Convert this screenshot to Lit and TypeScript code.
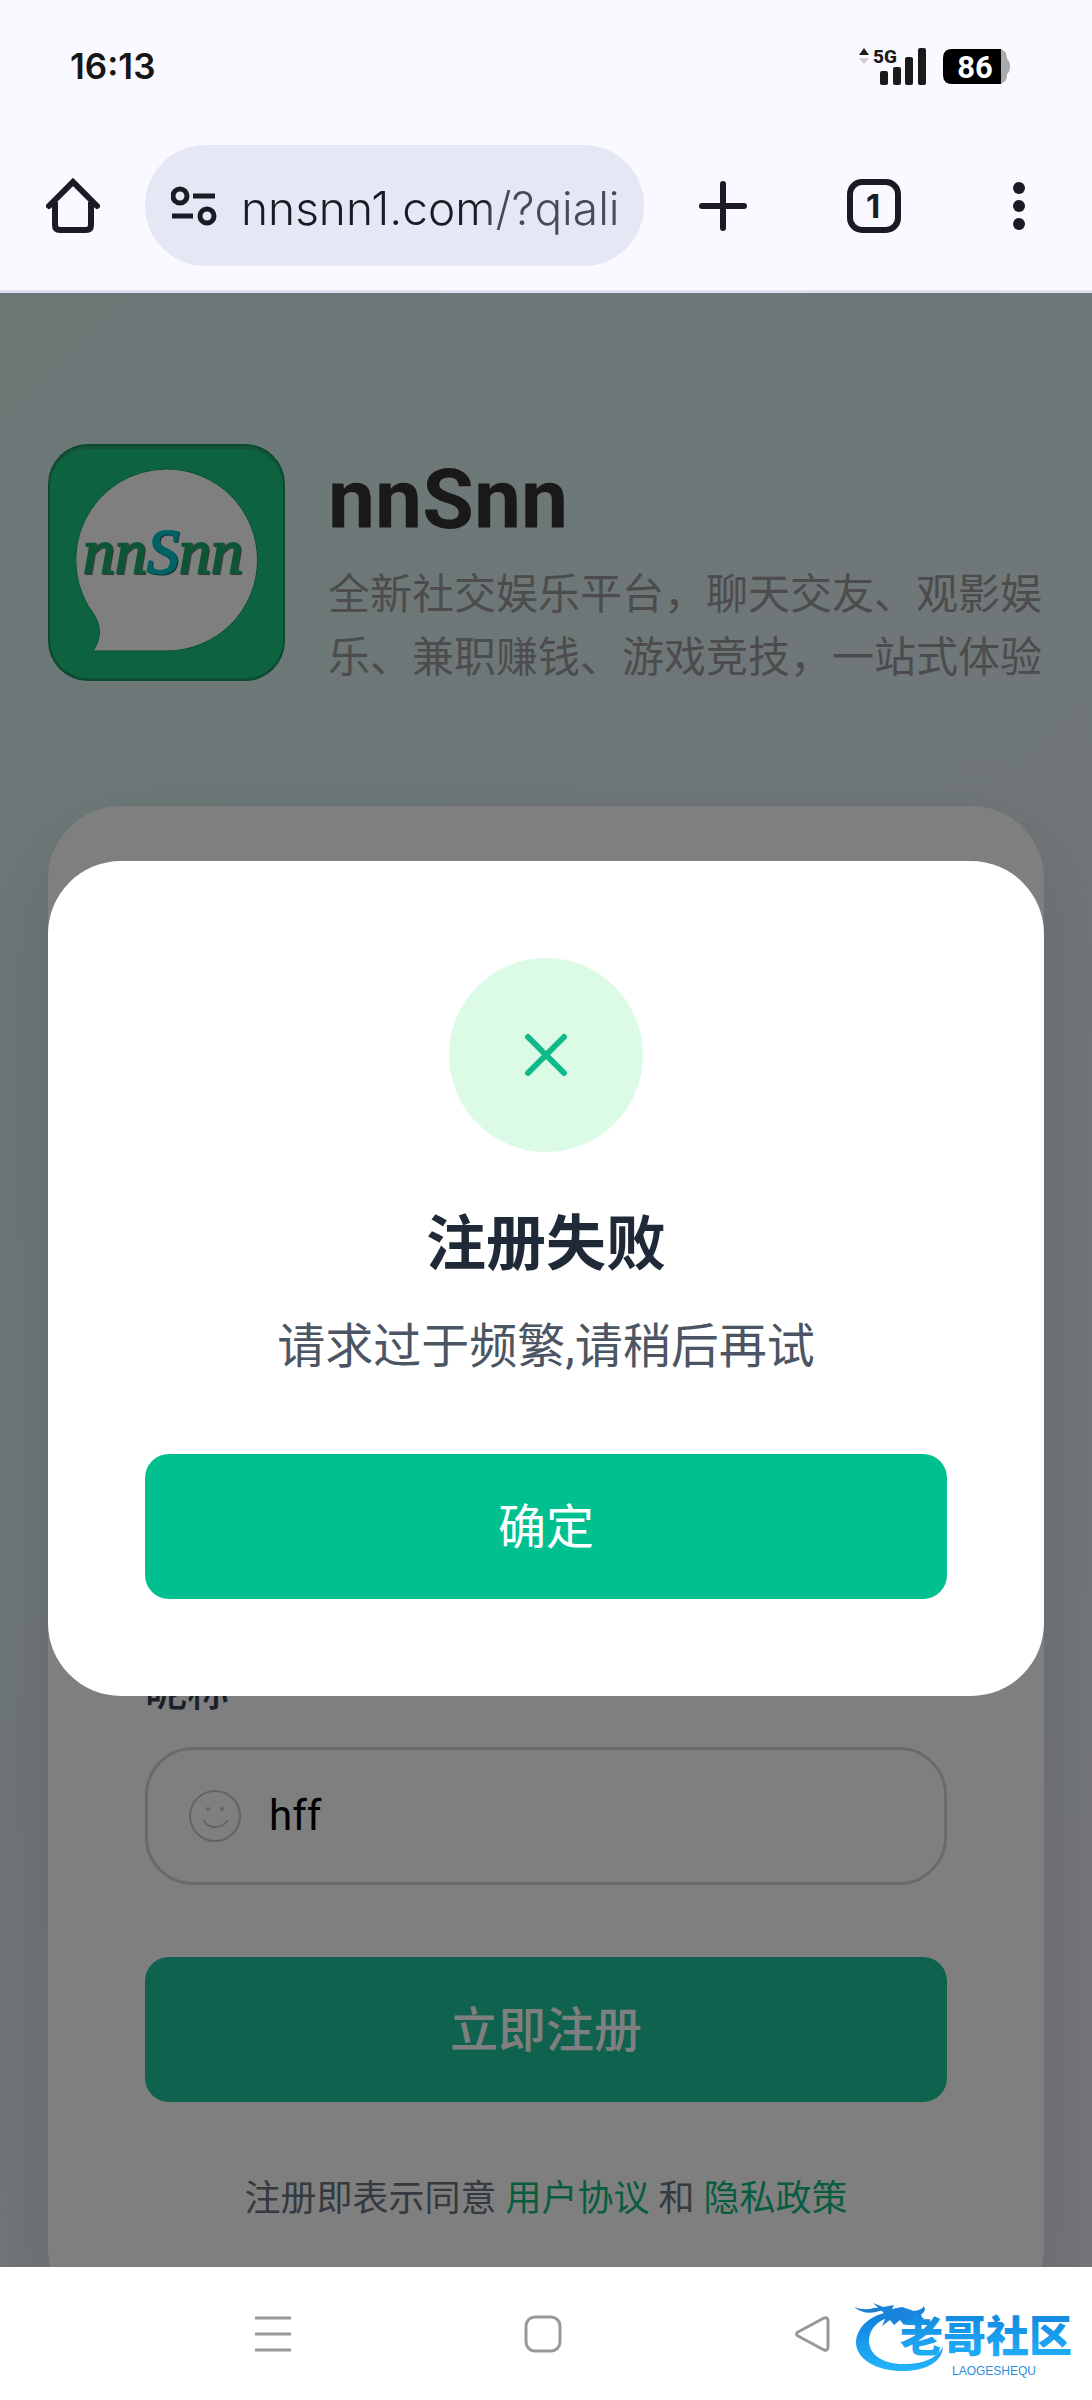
import { LitElement, html, css, svg } from "lit";
import { customElement, state } from "lit/decorators.js";

const SANS = css`Roboto, "Noto Sans CJK SC", sans-serif`;

/* Phone status bar and browser toolbar */
@customElement("browser-chrome")
class BrowserChrome extends LitElement {
  static styles = css`
    :host {
      display: block;
      background: #f9f9ff;
      border-bottom: 3px solid #dfe2ee;
      color: #1a1b24;
    }
    .status {
      display: flex;
      align-items: center;
      justify-content: space-between;
      height: 132px;
      padding: 0 82px 0 70px;
      box-sizing: border-box;
    }
    .time {
      font: 600 35px/44px Inter, sans-serif;
      color: #161616;
    }
    .signals {
      display: flex;
      align-items: center;
      gap: 16px;
    }
    .toolbar {
      display: flex;
      align-items: center;
      padding: 13px 52px 24px 46px;
    }
    button {
      display: flex;
      padding: 0;
      border: 0;
      background: none;
      color: inherit;
    }
    svg {
      display: block;
    }
    .address {
      flex: 1;
      min-width: 0;
      display: flex;
      align-items: center;
      gap: 24px;
      height: 121px;
      margin: 0 52px 0 45px;
      padding: 0 18px 0 26px;
      box-sizing: border-box;
      border-radius: 61px;
      background: #e4e7f4;
    }
    .url {
      flex: 1;
      min-width: 0;
      padding: 4px 0 0;
      border: 0;
      outline: 0;
      font: 300 46px/64px Inter, sans-serif;
      background: linear-gradient(90deg, #1a1b24 246px, #474955 250px);
      -webkit-background-clip: text;
      background-clip: text;
      -webkit-text-fill-color: transparent;
    }
    .actions {
      display: flex;
      align-items: center;
      gap: 97px;
    }
  `;

  render() {
    return html`
      <div class="status">
        <span class="time">16:13</span>
        <div class="signals">
          <svg width="68" height="50" viewBox="0 -6 68 50" fill="#1a1a1a">
            <path d="M0 8 5 1 10 8Z" />
            <path d="M0 11H10L5 17Z" fill="#cfcfd4" />
            <text x="14" y="16" font-family="Roboto" font-weight="800" font-size="19">5G</text>
            <rect x="21" y="24" width="8" height="14" rx="2" />
            <rect x="34" y="20" width="8" height="18" rx="2" />
            <rect x="46" y="10" width="8" height="28" rx="2" />
            <rect x="59" y="1" width="8" height="37" rx="2" />
          </svg>
          <svg width="67" height="45" viewBox="0 -5 67 45">
            <path d="M56 0q8 1 8 9v1q3 2 3 7.500t-3 7.500v1q0 8-8 9z" fill="#aaaaae" />
            <path d="M9 0H58V35H9Q0 35 0 26V9Q0 0 9 0Z" fill="#000" />
            <text x="32" y="29" text-anchor="middle" font-family="Roboto" font-weight="700" font-size="31" fill="#fff">86</text>
          </svg>
        </div>
      </div>
      <div class="toolbar">
        <button aria-label="主页">
          <svg width="54" height="56" viewBox="0 0 54 56" fill="none" stroke="currentColor" stroke-width="6" stroke-linecap="round" stroke-linejoin="round">
            <path d="M3 28 27 4 51 28" stroke-linejoin="miter" />
            <path d="M9 24V47q0 5 5 5H40q5 0 5-5V24" stroke-linecap="butt" />
          </svg>
        </button>
        <div class="address">
          <svg width="46" height="40" viewBox="0 0 46 40" fill="none" stroke="currentColor" stroke-width="5">
            <circle cx="9" cy="10" r="7" />
            <path d="M22 10H44M1 30H22" />
            <circle cx="36" cy="30" r="7" />
          </svg>
          <input class="url" type="text" aria-label="网址" value="nnsnn1.com/?qiali" />
        </div>
        <div class="actions">
          <button aria-label="新标签页">
            <svg width="54" height="54" viewBox="0 0 54 54" stroke="currentColor" stroke-width="6" stroke-linecap="round">
              <path d="M6 27H48M27 5V49" />
            </svg>
          </button>
          <button aria-label="标签页">
            <svg width="54" height="54" viewBox="0 0 54 54">
              <rect x="3" y="3" width="48" height="48" rx="12" fill="none" stroke="currentColor" stroke-width="6" />
              <text x="26" y="39" text-anchor="middle" font-family="Inter" font-weight="700" font-size="33" fill="currentColor">1</text>
            </svg>
          </button>
          <button aria-label="菜单">
            <svg width="42" height="54" viewBox="0 0 42 54" fill="currentColor">
              <circle cx="21" cy="9" r="6" />
              <circle cx="21" cy="27" r="6" />
              <circle cx="21" cy="45" r="6" />
            </svg>
          </button>
        </div>
      </div>
    `;
  }
}

/* App logo, name and introduction */
@customElement("brand-header")
class BrandHeader extends LitElement {
  static styles = css`
    :host {
      display: flex;
      align-items: flex-start;
      gap: 43px;
      font-family: ${SANS};
    }
    .logo {
      flex: none;
      display: block;
    }
    .about {
      flex: 1;
      padding-top: 6px;
    }
    .name {
      margin: 0 0 13px;
      font-size: 84px;
      line-height: 100px;
      font-weight: 700;
      color: #333;
    }
    .intro {
      margin: 0;
      font-size: 42px;
      line-height: 63px;
      font-weight: 400;
      color: #999;
    }
  `;

  render() {
    return html`
      <svg class="logo" width="237" height="237" viewBox="0 0 237 237">
        <rect width="237" height="237" rx="40" fill="#189561" />
        <rect x="2" y="2" width="233" height="233" rx="38" fill="#28a870" />
        <rect x="2" y="5" width="233" height="229" rx="38" fill="#1ac77e" />
        <path
          d="M118.500 25A91 91 0 0 1 118.500 207H45Q57 190 47 172A91 91 0 0 1 118.500 25Z"
          fill="#fff" stroke="#0fa365" stroke-width="1" />
        <g font-family="Liberation Serif" font-style="italic" font-size="64">
          <text x="36" y="130" fill="#777" stroke="#777" stroke-width="2">nn<tspan fill="#2a5a76" stroke="#2a5a76">S</tspan>nn</text>
          <text x="35" y="129" fill="#1ca96c" stroke="#1ca96c" stroke-width="2">nn<tspan fill="#00c6c6" stroke="#00c6c6">S</tspan>nn</text>
        </g>
      </svg>
      <div class="about">
        <h1 class="name">nnSnn</h1>
        <p class="intro">全新社交娱乐平台，聊天交友、观影娱乐、兼职赚钱、游戏竞技，一站式体验</p>
      </div>
    `;
  }
}

/* Registration form */
@customElement("register-card")
class RegisterCard extends LitElement {
  static styles = css`
    :host {
      display: flex;
      flex-direction: column;
      justify-content: flex-end;
      padding: 97px;
      box-sizing: border-box;
      border-radius: 73px;
      background: #fff;
      box-shadow: 0 36px 96px rgba(0, 0, 0, 0.12);
      font-family: ${SANS};
    }
    .label {
      margin-bottom: 24px;
      font-size: 42px;
      line-height: 63px;
      font-weight: 500;
      color: #374151;
    }
    .field {
      display: flex;
      align-items: center;
      gap: 28px;
      height: 138px;
      margin-bottom: 72px;
      padding: 0 41px;
      box-sizing: border-box;
      border: 3px solid #d4d4d4;
      border-radius: 48px;
    }
    .input {
      flex: 1;
      min-width: 0;
      padding: 0;
      border: 0;
      outline: 0;
      background: none;
      font: 400 42px/60px ${SANS};
      color: #000;
    }
    .submit {
      height: 145px;
      margin-bottom: 72px;
      padding: 2px 0 0;
      border: 0;
      border-radius: 24px;
      background: #1fc49a;
      color: #fff;
      font: 500 48px/72px ${SANS};
    }
    .terms {
      margin: 0;
      font-size: 36px;
      line-height: 50px;
      text-align: center;
      color: #6b7280;
    }
    .terms a {
      color: #10b981;
      text-decoration: none;
    }
  `;

  render() {
    return html`
      <label class="label" for="nickname">昵称</label>
      <div class="field">
        <svg width="52" height="52" viewBox="0 0 52 52" fill="none" stroke="#c8c8c8" stroke-width="2" stroke-linecap="round">
          <circle cx="26" cy="26" r="25" />
          <circle cx="19" cy="19" r="2" fill="#c8c8c8" stroke="none" />
          <circle cx="33" cy="19" r="2" fill="#c8c8c8" stroke="none" />
          <path d="M15 31c4 8 18 8 23 0" />
        </svg>
        <input class="input" id="nickname" type="text" value="hff" />
      </div>
      <button class="submit" type="submit">立即注册</button>
      <p class="terms">注册即表示同意 <a href="#terms">用户协议</a> 和 <a href="#privacy">隐私政策</a></p>
    `;
  }
}

/* Result dialog shown above the dimmed page */
@customElement("result-dialog")
class ResultDialog extends LitElement {
  static styles = css`
    :host {
      display: flex;
      flex-direction: column;
      align-items: center;
      width: 100%;
      padding: 97px;
      box-sizing: border-box;
      border-radius: 73px;
      background: #fff;
      font-family: ${SANS};
    }
    .badge {
      display: grid;
      place-items: center;
      width: 194px;
      height: 194px;
      border-radius: 50%;
      background: #dcfbe7;
    }
    .title {
      margin: 52px 0 24px;
      font-size: 60px;
      line-height: 82px;
      font-weight: 600;
      color: #1f2937;
    }
    .message {
      margin: 0 0 70px;
      font-size: 48px;
      line-height: 74px;
      color: #4b5563;
    }
    .confirm {
      align-self: stretch;
      height: 145px;
      padding: 2px 0 0;
      border: 0;
      border-radius: 24px;
      background: #00c090;
      color: #fff;
      font: 400 48px/72px ${SANS};
    }
  `;

  render() {
    return html`
      <div class="badge">
        <svg width="44" height="44" viewBox="0 0 44 44" stroke="#10b98a" stroke-width="6" stroke-linecap="round">
          <path d="M4 4 40 40M40 4 4 40" />
        </svg>
      </div>
      <h2 class="title">注册失败</h2>
      <p class="message">请求过于频繁,请稍后再试</p>
      <button class="confirm" @click=${() => this.dispatchEvent(new CustomEvent("confirm"))}>确定</button>
    `;
  }
}

/* System navigation bar with the community mark */
@customElement("system-nav")
class SystemNav extends LitElement {
  static styles = css`
    :host {
      position: relative;
      display: block;
      background: #fff;
    }
    .keys {
      display: flex;
      align-items: center;
      justify-content: center;
      gap: 232px;
      height: 133px;
      padding-right: 6px;
      box-sizing: border-box;
    }
    button {
      display: flex;
      padding: 0;
      border: 0;
      background: none;
    }
    .mark {
      position: absolute;
      right: 12px;
      bottom: 20px;
      display: block;
    }
  `;

  render() {
    const swoosh = svg`
      <path d="M41 14C20 14 3 27 2 44C2 62 24 74 52 73C72 72 88 64 89 49C82 61 68 66 52 66C30 67 15 57 15 43C15 31 24 22 38 18Z" fill="url(#mark-fill)"/>
      <path d="M0 9Q10 13 20 10Q30 9 36 14Q28 11 22 14Q10 17 0 9Z" fill="#1c7fd0"/>
      <path d="M19 5L29 9L40 7L38 11L48 9L60 13Q68 12 70 8Q73 14 66 17L60 17L70 20L68 22L60 21L64 25L56 23L50 27L46 22L40 27L36 22L28 28L31 21L23 19L30 15Z" fill="#1a84dc"/>`;
    return html`
      <div class="keys">
        <button aria-label="最近任务">
          <svg width="38" height="38" viewBox="0 0 38 38" stroke="#999" stroke-width="3">
            <path d="M1 3H37M1 19H37M1 35H37" />
          </svg>
        </button>
        <button aria-label="主屏幕">
          <svg width="38" height="38" viewBox="0 0 38 38" fill="none" stroke="#999" stroke-width="3">
            <rect x="2" y="2" width="34" height="34" rx="9" />
          </svg>
        </button>
        <button aria-label="返回">
          <svg width="38" height="38" viewBox="0 0 38 38" fill="none" stroke="#999" stroke-width="3" stroke-linejoin="round">
            <path d="M4 17 30 3Q34 2 34 6V32Q34 36 30 35L4 21Q1 19 4 17Z" />
          </svg>
        </button>
      </div>
      <svg class="mark" width="226" height="82" viewBox="0 0 226 82">
        <defs>
          <linearGradient id="mark-fill" x1="0" y1="0" x2="0" y2="1">
            <stop offset="0" stop-color="#0f7fdb" />
            <stop offset="1" stop-color="#22b4fb" />
          </linearGradient>
        </defs>
        ${swoosh}
        <text x="46" y="54" font-family="Noto Sans CJK SC" font-weight="900" font-size="43" fill="url(#mark-fill)">老哥社区</text>
        <text x="98" y="77" font-family="Liberation Sans" font-size="12" fill="#2b8fdc">LAOGESHEQU</text>
      </svg>
    `;
  }
}

@customElement("app-root")
class AppRoot extends LitElement {
  static styles = css`
    :host {
      display: flex;
      flex-direction: column;
      min-height: 100vh;
      background: #fff;
    }
    .viewport {
      position: relative;
      flex: 1;
      display: flex;
      flex-direction: column;
      gap: 117px;
      padding: 151px 48px 0;
      overflow: hidden;
      background: linear-gradient(135deg, #d6f1ed 0%, #e0eef1 45%, #ebecf6 100%);
    }
    .card {
      flex: 1;
      margin-bottom: -54px;
    }
    .overlay {
      position: absolute;
      inset: 0;
      display: flex;
      align-items: center;
      justify-content: center;
      padding: 0 48px 3px;
      background: rgba(0, 0, 0, 0.5);
    }
  `;

  @state() private dialogOpen = true;

  render() {
    return html`
      <browser-chrome></browser-chrome>
      <main class="viewport">
        <brand-header></brand-header>
        <register-card class="card"></register-card>
        ${this.dialogOpen
          ? html`<div class="overlay">
              <result-dialog role="alertdialog" @confirm=${() => (this.dialogOpen = false)}></result-dialog>
            </div>`
          : null}
      </main>
      <system-nav></system-nav>
    `;
  }
}
